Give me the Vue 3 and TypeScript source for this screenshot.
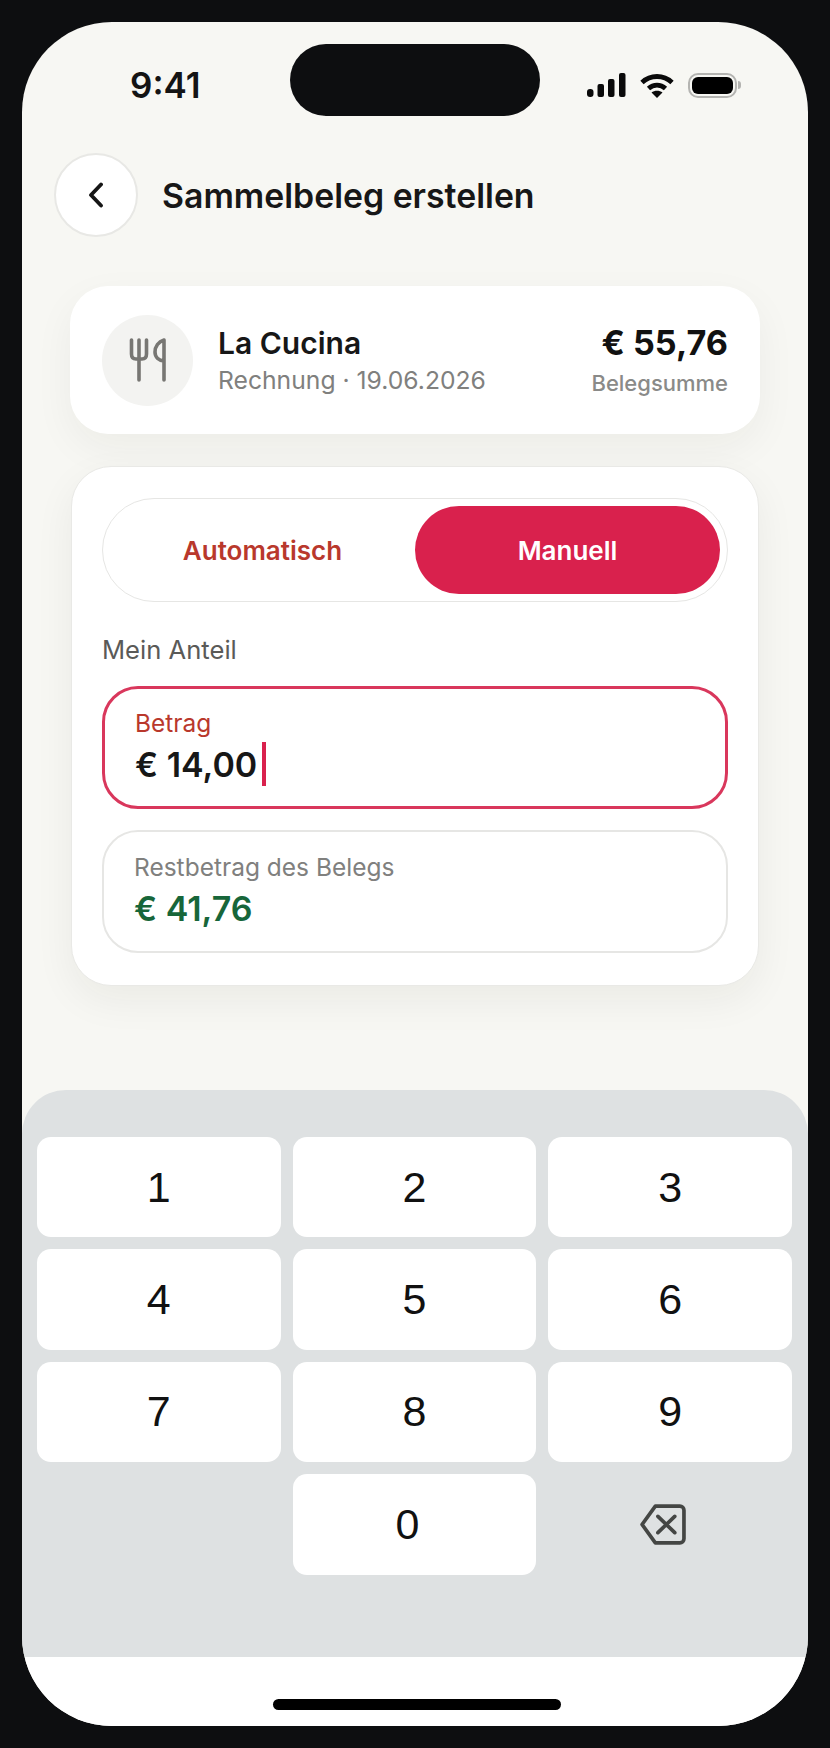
<script setup lang="ts">
import { ref } from "vue";

const mode = ref("manuell");
const digits = ["1", "2", "3", "4", "5", "6", "7", "8", "9"];
</script>

<template>
  <div class="frame">
    <div class="phone">
      <div class="island"></div>

      <div class="status">
        <span class="time">9:41</span>
        <div class="status-icons">
          <svg class="signal" width="39" height="24" viewBox="0 0 39 24">
            <rect x="0" y="16" width="6.5" height="8" rx="3" />
            <rect x="10.5" y="11" width="6.5" height="13" rx="2" />
            <rect x="21" y="6" width="6.5" height="18" rx="2" />
            <rect x="32" y="0" width="6.5" height="24" rx="2" />
          </svg>
          <svg class="wifi" width="34" height="25" viewBox="0 0 34 25">
            <path d="M2 9.5C10.5 1.5 23.5 1.5 32 9.5" />
            <path d="M8.5 15.5C13.5 11 20.5 11 25.5 15.5" />
            <path class="wifi-dot" d="M17 25L11.5 19.5C14.5 17 19.5 17 22.5 19.5Z" />
          </svg>
          <div class="battery">
            <div class="battery-fill"></div>
          </div>
        </div>
      </div>

      <div class="header">
        <button class="back">
          <svg width="18" height="26" viewBox="0 0 18 26">
            <path d="M14 2.5L4 13L14 23.5" />
          </svg>
        </button>
        <span class="title">Sammelbeleg erstellen</span>
      </div>

      <div class="content">
        <div class="receipt">
          <div class="avatar">
            <svg width="40" height="46" viewBox="0 0 40 46">
              <path d="M3.5 3V17C3.5 20.5 5 22 8 22H14C17 22 18.5 20.5 18.5 17V3M11 3V43" />
              <path d="M36 3C30.5 4.5 27 9.5 27 15C27 20.5 31 23.5 36 24M36 3V43" />
            </svg>
          </div>
          <div class="receipt-info">
            <span class="name">La Cucina</span>
            <span class="meta">Rechnung · 19.06.2026</span>
          </div>
          <div class="receipt-sum">
            <span class="sum">€ 55,76</span>
            <span class="sum-label">Belegsumme</span>
          </div>
        </div>

        <div class="panel">
          <div class="segment">
            <button class="segment-btn" :class="{ active: mode == 'auto' }" @click="mode = 'auto'">Automatisch</button>
            <button class="segment-btn" :class="{ active: mode == 'manuell' }" @click="mode = 'manuell'">Manuell</button>
          </div>

          <span class="share-label">Mein Anteil</span>

          <div class="field field-active">
            <span class="field-label red">Betrag</span>
            <div class="field-value">€ 14,00<i class="caret"></i></div>
          </div>

          <div class="field">
            <span class="field-label">Restbetrag des Belegs</span>
            <div class="field-value green">€ 41,76</div>
          </div>
        </div>
      </div>

      <div class="keyboard">
        <button v-for="d in digits" :key="d" class="key">{{ d }}</button>
        <div class="key-empty"></div>
        <button class="key key-zero">0</button>
        <div class="key-empty">
          <svg width="47" height="41" viewBox="0 0 46 40">
            <path d="M16 2H40C42.2 2 44 3.8 44 6V34C44 36.2 42.2 38 40 38H16L3 20Z" />
            <path d="M18.5 12L35 28M35 12L18.5 28" />
          </svg>
        </div>
      </div>

      <div class="home">
        <div class="home-bar"></div>
      </div>
    </div>
  </div>
</template>

<style>
html,
body {
  margin: 0;
  background: #0d0e10;
}
</style>

<style scoped>
.frame {
  width: 830px;
  height: 1748px;
  padding: 22px;
  box-sizing: border-box;
  background: #0d0e10;
  font-family: Inter, "Liberation Sans", sans-serif;
}
.phone {
  position: relative;
  display: flex;
  flex-direction: column;
  height: 1704px;
  border-radius: 90px;
  overflow: hidden;
  background: #f7f7f3;
}
.island {
  position: absolute;
  top: 22px;
  left: 268px;
  width: 250px;
  height: 72px;
  border-radius: 36px;
  background: #0d0e10;
}
.status {
  display: flex;
  justify-content: space-between;
  align-items: center;
  height: 24px;
  padding: 51px 71px 0 108px;
}
.time {
  font-size: 35px;
  font-weight: 600;
  line-height: 24px;
  color: #141414;
}
.status-icons {
  display: flex;
  align-items: center;
  gap: 14px;
}
.signal,
.wifi {
  display: block;
}
.signal rect {
  fill: #0a0a0a;
}
.wifi path {
  fill: none;
  stroke: #0a0a0a;
  stroke-width: 4.8;
}
.wifi .wifi-dot {
  fill: #0a0a0a;
  stroke: none;
}
.battery {
  position: relative;
  width: 49px;
  height: 25px;
  box-sizing: border-box;
  padding: 2px;
  border: 2px solid #b4b4b1;
  border-radius: 10px;
}
.battery::after {
  content: "";
  position: absolute;
  top: 6px;
  right: -6px;
  width: 3px;
  height: 8px;
  border-radius: 0 3px 3px 0;
  background: #b4b4b1;
}
.battery-fill {
  height: 100%;
  border-radius: 6px;
  background: #000;
}
.header {
  display: flex;
  align-items: center;
  gap: 24px;
  margin-top: 56px;
  padding-left: 32px;
}
.back {
  display: flex;
  justify-content: center;
  align-items: center;
  width: 84px;
  height: 84px;
  padding: 0;
  border: 2px solid #e8e8e5;
  border-radius: 50%;
  background: #fff;
}
.back path {
  fill: none;
  stroke: #161616;
  stroke-width: 3.8;
  stroke-linecap: round;
  stroke-linejoin: round;
}
.title {
  font-size: 33.8px;
  font-weight: 600;
  color: #171717;
}
.content {
  display: flex;
  flex-direction: column;
  gap: 32px;
  margin-top: 49px;
  padding: 0 49px;
}
.receipt {
  display: flex;
  align-items: center;
  height: 148px;
  margin: 0 -1px;
  padding: 0 32px;
  border-radius: 38px;
  background: #fff;
  box-shadow: 0 14px 40px rgba(30, 30, 20, 0.05);
}
.avatar {
  display: flex;
  justify-content: center;
  align-items: center;
  flex: none;
  width: 91px;
  height: 91px;
  border-radius: 50%;
  background: #f3f3f1;
}
.avatar path {
  fill: none;
  stroke: #777673;
  stroke-width: 3.6;
  stroke-linecap: round;
  stroke-linejoin: round;
}
.receipt-info {
  display: flex;
  flex-direction: column;
  flex: 1;
  gap: 3px;
  margin-left: 25px;
}
.name {
  font-size: 30px;
  font-weight: 600;
  line-height: 36px;
  color: #171717;
}
.meta {
  font-size: 24.7px;
  line-height: 32px;
  color: #80807e;
}
.receipt-sum {
  display: flex;
  flex-direction: column;
  align-items: flex-end;
  gap: 6px;
}
.sum {
  font-size: 34.2px;
  font-weight: 700;
  line-height: 40px;
  color: #111;
}
.sum-label {
  font-size: 22px;
  font-weight: 500;
  line-height: 28px;
  color: #8a8a88;
}
.panel {
  display: flex;
  flex-direction: column;
  height: 520px;
  box-sizing: border-box;
  padding: 31px 30px 0;
  border: 1px solid #e9e9e6;
  border-radius: 40px;
  background: #fff;
  box-shadow: 0 14px 40px rgba(30, 30, 20, 0.06);
}
.segment {
  display: grid;
  grid-template-columns: 1fr 1fr;
  height: 104px;
  box-sizing: border-box;
  padding: 7px;
  border: 1px solid #e6e6e4;
  border-radius: 52px;
}
.segment-btn {
  padding: 0;
  border: none;
  border-radius: 44px;
  background: none;
  font-family: inherit;
  font-size: 26px;
  font-weight: 600;
  color: #b9382c;
}
.segment-btn.active {
  background: #d9214d;
  color: #fff;
}
.share-label {
  margin-top: 32px;
  font-size: 25.6px;
  font-weight: 400;
  line-height: 32px;
  color: #5a5a58;
}
.field {
  display: flex;
  flex-direction: column;
  justify-content: center;
  gap: 7px;
  height: 123px;
  box-sizing: border-box;
  margin-top: 21px;
  padding: 0 30px 2px;
  border: 2px solid #e6e6e4;
  border-radius: 36px;
}
.field-active {
  margin-top: 20px;
  border: 3px solid #d9375c;
}
.field-label {
  font-size: 24.5px;
  font-weight: 400;
  line-height: 28px;
  color: #80807e;
}
.field-label.red {
  color: #b9382c;
}
.field-value {
  display: flex;
  align-items: center;
  height: 40px;
  font-size: 34px;
  font-weight: 600;
  color: #171717;
}
.field-value.green {
  color: #17663a;
}
.caret {
  width: 3.5px;
  height: 44px;
  margin-left: 5px;
  background: #d9214d;
}
.keyboard {
  display: grid;
  grid-template-columns: repeat(3, 1fr);
  grid-auto-rows: 100.4px;
  gap: 12px;
  height: 567px;
  box-sizing: border-box;
  margin-top: auto;
  padding: 47px 16px 0 15px;
  border-radius: 44px 44px 0 0;
  background: #dee1e2;
}
.key {
  padding: 0;
  border: none;
  border-radius: 14px;
  background: #fff;
  font-family: "Liberation Sans", Arial, sans-serif;
  font-size: 43px;
  color: #111;
}
.key-zero {
  padding-right: 14px;
}
.key-empty {
  display: flex;
  justify-content: center;
  align-items: center;
  padding-right: 16px;
}
.key-empty path {
  fill: none;
  stroke: #444644;
  stroke-width: 3.6;
  stroke-linecap: round;
  stroke-linejoin: round;
}
.home {
  display: flex;
  justify-content: center;
  flex: none;
  height: 69px;
  padding-left: 3px;
  background: #fff;
}
.home-bar {
  width: 288px;
  height: 11px;
  margin-top: 42px;
  border-radius: 6px;
  background: #000;
}
</style>
